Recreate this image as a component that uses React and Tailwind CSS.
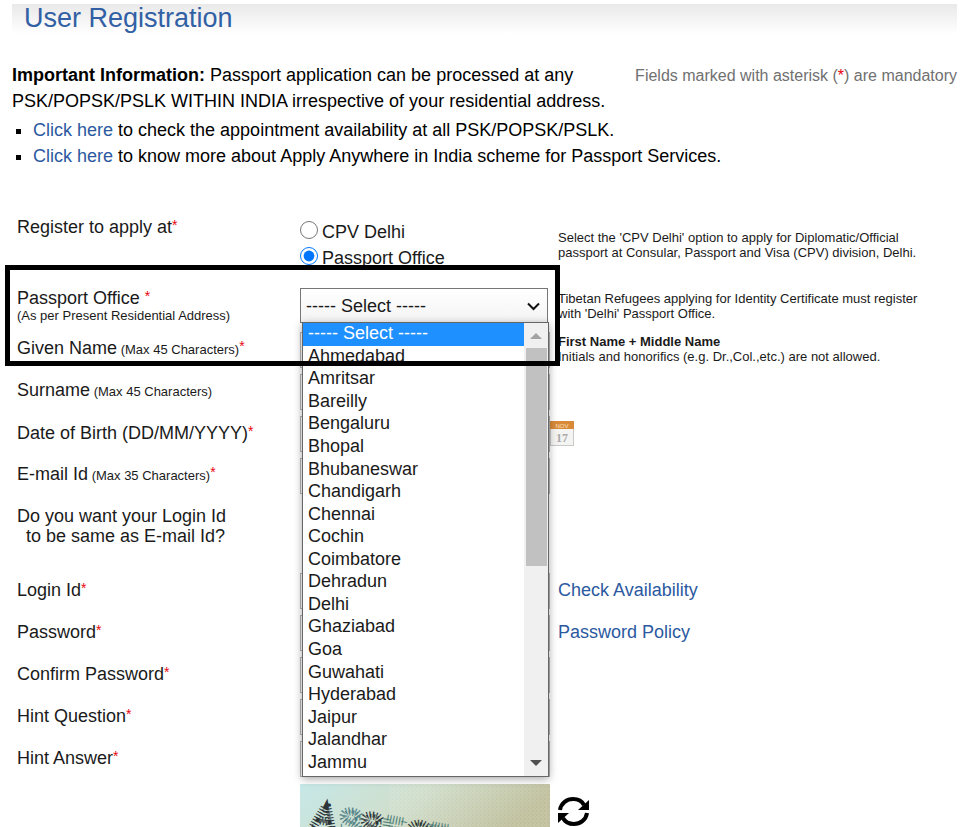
import { useState } from "react";

const offices = [
  "----- Select -----",
  "Ahmedabad",
  "Amritsar",
  "Bareilly",
  "Bengaluru",
  "Bhopal",
  "Bhubaneswar",
  "Chandigarh",
  "Chennai",
  "Cochin",
  "Coimbatore",
  "Dehradun",
  "Delhi",
  "Ghaziabad",
  "Goa",
  "Guwahati",
  "Hyderabad",
  "Jaipur",
  "Jalandhar",
  "Jammu",
];

const captchaLetters = [
  { ch: "A", x: 11, y: 43, fill: "#2c3438" },
  { ch: "S", x: 37, y: 48, fill: "#4f7f86" },
  { ch: "S", x: 58, y: 52, fill: "#2c3438" },
  { ch: "E", x: 80, y: 56, fill: "#4f7f78" },
  { ch: "C", x: 104, y: 60, fill: "#2c3a34" },
  { ch: "T", x: 126, y: 63, fill: "#56807a" },
];

const rowGrid = "grid grid-cols-[283px_250px_1fr]";
const inputClass = "h-[36px] w-full border border-[#b4b4b4] bg-white px-2";
const linkClass = "text-[#2b59a0] hover:underline";

function Star() {
  return <sup className="top-0 align-top text-sm leading-4 text-red-600">*</sup>;
}

function Field({ id, label, hint, required, type = "text", children }) {
  return (
    <div className={`${rowGrid} h-[42px] items-center`}>
      <label htmlFor={id} className="pb-[2px]">
        {label}
        {hint && <span className="text-[13px]"> {hint}</span>}
        {required && <Star />}
      </label>
      {type === "select" ? (
        <select id={id} className={inputClass} />
      ) : (
        <input id={id} type={type} className={inputClass} />
      )}
      <div className="pb-[2px] pl-2">{children}</div>
    </div>
  );
}

export default function App() {
  const [applyAt, setApplyAt] = useState("office");
  const [office, setOffice] = useState(0);

  return (
    <main className="bg-white pt-1 pr-[18px] pl-3 font-['Liberation_Sans',Arial,sans-serif] text-[18px] leading-5 text-[#1a1a1a]">
      <h1 className="h-[30px] bg-gradient-to-b from-[#e9e9e9] to-white pl-3 text-[27px] leading-7 text-[#3260a4]">
        User Registration
      </h1>

      <section className="mt-7 flex items-start justify-between text-black">
        <p className="leading-[26px] whitespace-nowrap">
          <b>Important Information:</b> Passport application can be processed at any
          <br />
          PSK/POPSK/PSLK WITHIN INDIA irrespective of your residential address.
        </p>
        <p className="text-base leading-7 whitespace-nowrap text-[#707070]">
          Fields marked with asterisk (<span className="text-red-600">*</span>) are mandatory
        </p>
      </section>
      <ul className="mt-[3px] list-[square] pl-[21px] leading-[26px] text-black">
        <li>
          <a href="#availability" className={linkClass}>Click here</a> to check the appointment
          availability at all PSK/POPSK/PSLK.
        </li>
        <li>
          <a href="#anywhere" className={linkClass}>Click here</a> to know more about Apply Anywhere
          in India scheme for Passport Services.
        </li>
      </ul>

      <form className="relative mt-12 pl-[5px]" onSubmit={(e) => e.preventDefault()}>
        {/* Register at */}
        <div className={`${rowGrid} h-[71px]`}>
          <span id="apply-label">
            Register to apply at
            <Star />
          </span>
          <div role="radiogroup" aria-labelledby="apply-label" className="flex flex-col pt-[2px]">
            <label className="flex h-[26px] items-center gap-1">
              <input
                type="radio"
                name="applyAt"
                className="mb-1 size-[18px]"
                checked={applyAt === "cpv"}
                onChange={() => setApplyAt("cpv")}
              />
              CPV Delhi
            </label>
            <label className="flex h-[26px] items-center gap-1">
              <input
                type="radio"
                name="applyAt"
                className="mb-1 size-[18px]"
                checked={applyAt === "office"}
                onChange={() => setApplyAt("office")}
              />
              Passport Office
            </label>
          </div>
          <p className="pt-[13px] pl-2 text-[13px] leading-[15px]">
            Select the 'CPV Delhi' option to apply for Diplomatic/Official
            <br />
            passport at Consular, Passport and Visa (CPV) division, Delhi.
          </p>
        </div>

        {/* Passport office */}
        <div className={`${rowGrid} h-[41px]`}>
          <label htmlFor="office">
            Passport Office <Star />
            <span className="block text-[13px] leading-4">(As per Present Residential Address)</span>
          </label>
          <div className="relative">
            <select
              id="office"
              value={office}
              onChange={(e) => setOffice(Number(e.target.value))}
              className="h-[35px] w-[248px] appearance-none border border-[#767676] bg-gradient-to-b from-white to-[#f4f4f4] pl-[5px]"
            >
              {offices.map((name, i) => (
                <option key={name} value={i}>{name}</option>
              ))}
            </select>
            <svg className="pointer-events-none absolute top-[14px] right-[10px]" width="13" height="9" viewBox="0 0 13 9" fill="none" stroke="#111" strokeWidth="2">
              <path d="M1 1.5 6.5 7 12 1.5" />
            </svg>

            {/* Open list */}
            <div className="absolute top-[34px] left-[2px] z-10 flex h-[455px] w-[247px] border border-[#666] bg-white shadow-[0_2px_8px_rgba(0,0,0,0.35)]">
              <ul role="listbox" aria-label="Passport Office" className="grid flex-1 auto-rows-fr pb-[2px]">
                {offices.map((name, i) => (
                  <li
                    key={name}
                    role="option"
                    aria-selected={i === office}
                    onClick={() => setOffice(i)}
                    className="flex items-center pb-[2px] pl-[5px] leading-5 aria-selected:bg-[#1e90ff] aria-selected:text-white"
                  >
                    {name}
                  </li>
                ))}
              </ul>
              <div className="flex w-6 flex-col items-center bg-[#f0f0f0]">
                <svg width="24" height="25" viewBox="0 0 24 25">
                  <path d="M6 16 12 10 18 16Z" fill="#a3a3a3" />
                </svg>
                <div className="h-[218px] w-[21px] bg-[#c1c1c1]" />
                <svg className="mt-auto" width="24" height="25" viewBox="0 0 24 25">
                  <path d="M6 9 12 15 18 9Z" fill="#505050" />
                </svg>
              </div>
            </div>
          </div>
          <p className="pt-[3px] pl-2 text-[13px] leading-[15px]">
            Tibetan Refugees applying for Identity Certificate must register
            <br />
            with 'Delhi' Passport Office.
          </p>
        </div>

        <Field id="given" label="Given Name" hint="(Max 45 Characters)" required>
          <p className="text-[13px] leading-[15px]">
            <b>First Name + Middle Name</b>
            <br />
            Initials and honorifics (e.g. Dr.,Col.,etc.) are not allowed.
          </p>
        </Field>
        <Field id="surname" label="Surname" hint="(Max 45 Characters)" />
        <div className="relative">
          <Field id="dob" label="Date of Birth (DD/MM/YYYY)" required />
          <button type="button" aria-label="Pick a date" className="absolute top-2 left-[533px]">
            <svg width="25" height="26" viewBox="0 0 25 26">
              <rect x="0.5" y="0.5" width="23" height="24" fill="#f4f4f2" stroke="#c9c9c9" />
              <rect x="0" y="0" width="24" height="8" fill="#d98a38" />
              <text x="12" y="7" fontSize="6" textAnchor="middle" fill="#fbe3c4">NOV</text>
              <text x="12" y="21" fontSize="12" fontWeight="bold" textAnchor="middle" fill="#aaa" fontFamily="Liberation Serif, serif">17</text>
            </svg>
          </button>
        </div>
        <Field id="email" label="E-mail Id" hint="(Max 35 Characters)" required />

        <div className={`${rowGrid} h-[73px] pt-[9px]`}>
          <p>
            Do you want your Login Id
            <br />
            <span className="pl-[9px]">to be same as E-mail Id?</span>
          </p>
        </div>

        <Field id="login" label="Login Id" required>
          <a href="#check" className={linkClass}>Check Availability</a>
        </Field>
        <Field id="password" label="Password" type="password" required>
          <a href="#policy" className={linkClass}>Password Policy</a>
        </Field>
        <Field id="confirm" label="Confirm Password" type="password" required />
        <Field id="question" label="Hint Question" type="select" required />
        <Field id="answer" label="Hint Answer" required />

        {/* Captcha */}
        <div className={`${rowGrid} mt-1`}>
          <span />
          <svg className="h-[43px] w-full" viewBox="0 0 250 43" role="img" aria-label="Captcha">
            <defs>
              <linearGradient id="paper" x1="0" y1="0" x2="1" y2="0.2">
                <stop offset="0" stopColor="#c6e8e8" />
                <stop offset="0.5" stopColor="#d0decb" />
                <stop offset="1" stopColor="#bfbf9c" />
              </linearGradient>
              <pattern id="weave" width="4" height="4" patternUnits="userSpaceOnUse">
                <path d="M0 1H3M2 3H4" stroke="#fff" strokeOpacity="0.2" />
              </pattern>
            </defs>
            <rect width="250" height="43" fill="url(#paper)" />
            <rect x="90" width="160" height="43" fill="url(#weave)" />
            {captchaLetters.map((l, i) => (
              <text
                key={i}
                x={l.x}
                y={l.y}
                fontSize="34"
                fill="none"
                stroke={l.fill}
                strokeWidth="6"
                strokeDasharray="1 2"
                transform={`rotate(10 ${l.x} ${l.y})`}
              >
                {l.ch}
              </text>
            ))}
          </svg>
          <button type="button" aria-label="Refresh captcha" className="mt-3 ml-[7px] h-[31px] w-[33px]">
            <svg width="33" height="31" viewBox="0 0 33 31" fill="none" stroke="#000" strokeWidth="4">
              <path d="M3 14C4 7 10 3 16 3c5 0 9 2 11 6" />
              <path d="M30 17c-1 7-7 11-13 11-5 0-9-2-11-6" />
              <path d="M32 4v10H21Z" fill="#000" stroke="none" />
              <path d="M1 27V17h11Z" fill="#000" stroke="none" />
            </svg>
          </button>
        </div>

        {/* Highlight frame */}
        <div className="pointer-events-none absolute top-[48px] -left-[7px] z-20 h-[101px] w-[555px] border-[5px] border-black" />
      </form>
    </main>
  );
}
